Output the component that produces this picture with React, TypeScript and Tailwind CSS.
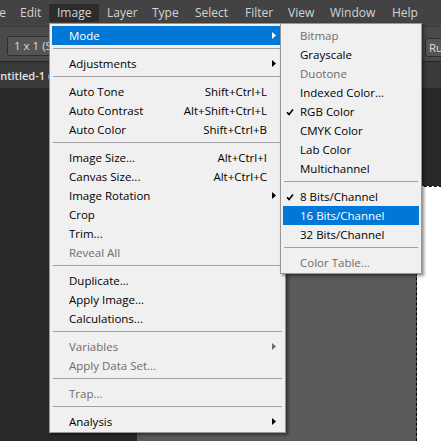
type MenuItem = {
  label: string
  shortcut?: string
  submenu?: boolean
  disabled?: boolean
  active?: boolean
  checked?: boolean
}

type Entry = MenuItem | 'sep'

const menuBar = [
  { label: 'File', w: 'w-[33px] -ml-[21px]' },
  { label: 'Edit', w: 'w-[37px]' },
  { label: 'Image', w: 'w-[50px]', open: true },
  { label: 'Layer', w: 'w-[45px]' },
  { label: 'Type', w: 'w-[43px]' },
  { label: 'Select', w: 'w-[50px]' },
  { label: 'Filter', w: 'w-[43px]' },
  { label: 'View', w: 'w-[42px]' },
  { label: 'Window', w: 'w-[62px]' },
  { label: 'Help', w: 'w-[45px]' },
]

const imageMenu: Entry[] = [
  { label: 'Mode', submenu: true, active: true },
  'sep',
  { label: 'Adjustments', submenu: true },
  'sep',
  { label: 'Auto Tone', shortcut: 'Shift+Ctrl+L' },
  { label: 'Auto Contrast', shortcut: 'Alt+Shift+Ctrl+L' },
  { label: 'Auto Color', shortcut: 'Shift+Ctrl+B' },
  'sep',
  { label: 'Image Size...', shortcut: 'Alt+Ctrl+I' },
  { label: 'Canvas Size...', shortcut: 'Alt+Ctrl+C' },
  { label: 'Image Rotation', submenu: true },
  { label: 'Crop' },
  { label: 'Trim...' },
  { label: 'Reveal All', disabled: true },
  'sep',
  { label: 'Duplicate...' },
  { label: 'Apply Image...' },
  { label: 'Calculations...' },
  'sep',
  { label: 'Variables', submenu: true, disabled: true },
  { label: 'Apply Data Set...', disabled: true },
  'sep',
  { label: 'Trap...', disabled: true },
  'sep',
  { label: 'Analysis', submenu: true },
]

const modeMenu: Entry[] = [
  { label: 'Bitmap', disabled: true },
  { label: 'Grayscale' },
  { label: 'Duotone', disabled: true },
  { label: 'Indexed Color...' },
  { label: 'RGB Color', checked: true },
  { label: 'CMYK Color' },
  { label: 'Lab Color' },
  { label: 'Multichannel' },
  'sep',
  { label: '8 Bits/Channel', checked: true },
  { label: '16 Bits/Channel', active: true },
  { label: '32 Bits/Channel' },
  'sep',
  { label: 'Color Table...', disabled: true },
]

function Arrow({ color }: { color: string }) {
  return (
    <svg width="4" height="7" viewBox="0 0 4 7" className="absolute right-[7px] top-[6px]">
      <path d="M0 0L4 3.5L0 7Z" fill={color} />
    </svg>
  )
}

function Check({ color }: { color: string }) {
  return (
    <svg width="8" height="8" viewBox="0 0 8 8" className="absolute left-[3px] top-[6px]">
      <path d="M1 4.2L3 6.4L7 1.4" fill="none" stroke={color} strokeWidth="1.6" />
    </svg>
  )
}

function MenuRows({ entries }: { entries: Entry[] }) {
  return (
    <>
      {entries.map((e, i) => {
        if (e === 'sep') {
          return <div key={i} className="mt-[3px] mb-[5px] mx-[1px] h-px bg-[#a0a0a0]" />
        }
        const text = e.active ? 'text-white' : e.disabled ? 'text-[#6d6d6d]' : 'text-black'
        const glyph = e.active ? '#ffffff' : e.disabled ? '#6d6d6d' : '#000000'
        return (
          <div
            key={i}
            className={`relative flex items-center h-[19px] pl-[17px] pr-[16px] ${text} ${e.active ? 'bg-[#0078d7]' : ''}`}
          >
            {e.checked && <Check color={glyph} />}
            <span className="flex-1 whitespace-nowrap">{e.label}</span>
            {e.shortcut && <span className="whitespace-nowrap">{e.shortcut}</span>}
            {e.submenu && <Arrow color={glyph} />}
          </div>
        )
      })}
    </>
  )
}

export default function App() {
  return (
    <div
      className="relative w-[441px] h-[441px] overflow-hidden bg-[#282828] flex flex-col text-[11.5px] leading-none"
      style={{ fontFamily: '"Open Sans", "Noto Sans", sans-serif' }}
    >
      {/* menu bar */}
      <div className="h-[26px] shrink-0 bg-[#434343] flex items-start pt-[4px] text-[#d4d4d4] text-[12px]">
        {menuBar.map((m) => (
          <div
            key={m.label}
            className={`${m.w} shrink-0 h-[18px] flex items-center pl-[8px] rounded-[2px] ${m.open ? 'bg-[#2c2c2c]' : ''}`}
          >
            {m.label}
          </div>
        ))}
      </div>

      {/* options bar */}
      <div className="h-[35px] shrink-0 bg-[#4a4a4a] border-t border-[#3a3a3a] flex items-start pt-[9px] pl-[7px]">
        <div className="h-[20px] px-[6px] flex items-center rounded-[3px] border border-[#2e2e2e] bg-[#555555] text-[#dcdcdc] whitespace-nowrap">
          1 x 1 (Sample)
        </div>
        <div className="ml-auto -mr-[24px] w-[40px] shrink-0 h-[19px] mt-[2px] flex items-center pl-[3px] rounded-[3px] border border-[#2e2e2e] bg-[#555555] text-[#dcdcdc] overflow-hidden whitespace-nowrap">
          Rulers
        </div>
      </div>

      {/* document tabs */}
      <div className="h-[27px] shrink-0 bg-[#393939] border-t border-[#262626] flex items-center">
        <span className="-ml-[8px] text-[#e2e2e2] font-semibold text-[11px] whitespace-nowrap">
          Untitled-1 @ 66.7% (RGB/8)
        </span>
      </div>

      {/* workspace with document */}
      <div className="flex-1 pl-[137px] pt-[98px]">
        <div className="w-[320px] h-[280px] bg-white border-t border-dashed border-black flex">
          <div className="w-[280px] h-full bg-[#5a5a5a] border-r border-dashed border-black" />
        </div>
      </div>

      {/* Image menu */}
      <div className="absolute left-[49px] top-[23px] w-[237px] bg-[#f0f0f0] border border-[#979797] pt-[2px] pb-[1px] px-[2px] shadow-[2px_2px_3px_rgba(0,0,0,0.45)]">
        <MenuRows entries={imageMenu} />
      </div>

      {/* Mode submenu */}
      <div className="absolute left-[280px] top-[23px] w-[142px] bg-[#f0f0f0] border border-[#979797] pt-[2px] pb-[1px] px-[2px] shadow-[2px_2px_3px_rgba(0,0,0,0.45)]">
        <MenuRows entries={modeMenu} />
      </div>
    </div>
  )
}
